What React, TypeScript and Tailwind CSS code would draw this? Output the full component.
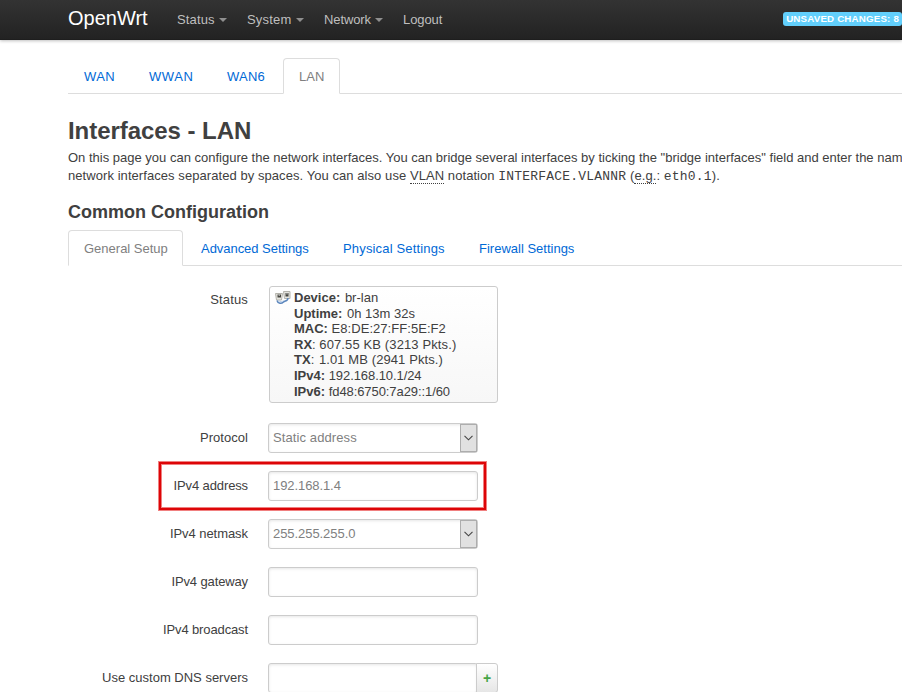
import { type ReactNode } from "react";
import clsx from "clsx";

type Item = {
  label: string;
  className: string;
};

const menuItems = [
  { label: "Status", dropdown: true, className: "w-[70px] tracking-[0.15px]" },
  { label: "System", dropdown: true, className: "w-[77px] tracking-[0.2px]" },
  { label: "Network", dropdown: true, className: "w-[79px] tracking-[-0.1px]" },
  { label: "Logout", dropdown: false, className: "tracking-[-0.1px]" },
];

const interfaceTabs: Item[] = [
  { label: "WAN", className: "w-[63px] tracking-[0.4px]" },
  { label: "WWAN", className: "w-[76px] tracking-[0.6px]" },
  { label: "WAN6", className: "w-[70px] tracking-[0.25px]" },
  { label: "LAN", className: "w-[57px]" },
];

const setupTabs: Item[] = [
  { label: "General Setup", className: "w-[115px]" },
  { label: "Advanced Settings", className: "w-[140px] tracking-[-0.04px]" },
  { label: "Physical Settings", className: "w-[134px] tracking-[0.16px]" },
  { label: "Firewall Settings", className: "w-[128px]" },
];

const statusRows = [
  { name: "Device:", value: "br-lan", className: "ml-px" },
  { name: "Uptime:", value: "0h 13m 32s", className: "ml-px" },
  { name: "MAC:", value: "E8:DE:27:FF:5E:F2", className: "tracking-[0.05px]" },
  {
    name: "RX",
    value: "607.55 KB (3213 Pkts.)",
    colon: true,
    className: "tracking-[0.12px]",
  },
  {
    name: "TX",
    value: "1.01 MB (2941 Pkts.)",
    colon: true,
    className: "ml-px tracking-[0.1px]",
  },
  { name: "IPv4:", value: "192.168.10.1/24", className: "tracking-[-0.08px]" },
  {
    name: "IPv6:",
    value: "fd48:6750:7a29::1/60",
    className: "tracking-[-0.08px]",
  },
];

function Header() {
  return (
    <header className="flex h-10 items-start bg-linear-to-b from-[#333] to-[#222] pl-[68px] shadow-[0_1px_3px_rgba(0,0,0,0.25),inset_0_-1px_0_rgba(0,0,0,0.1)]">
      <a className="w-[99px] pt-[8px] text-xl leading-5 text-white">OpenWrt</a>
      <nav className="flex pt-[10px] pl-[10px] leading-[19px] text-[#bfbfbf]">
        {menuItems.map((item) => (
          <a
            key={item.label}
            className={clsx("flex items-center", item.className)}
          >
            {item.label}
            {item.dropdown && (
              <span className="mt-px ml-1 border-x-4 border-t-4 border-x-transparent border-t-[#8f8f8f]" />
            )}
          </a>
        ))}
      </nav>
      <span className="mt-3 ml-auto h-[14px] rounded-[3px] bg-[#62cffc] px-[3px] text-[9.75px] leading-[14px] font-bold tracking-[0.17px] text-white">
        UNSAVED CHANGES: 8
      </span>
    </header>
  );
}

function Tabs({ items, active }: { items: Item[]; active: string }) {
  return (
    <ul className="flex h-9 border-b border-[#ddd]">
      {items.map((item) => (
        <li
          key={item.label}
          className={clsx(
            "mr-[2px] h-9 rounded-t border px-[15px] leading-9 whitespace-nowrap",
            item.label === active
              ? "border-[#ddd] border-b-white bg-white text-[#808080]"
              : "border-transparent text-[#0069d6]",
            item.className
          )}
        >
          {item.label}
        </li>
      ))}
    </ul>
  );
}

type RowProps = {
  label: string;
  labelClass?: string;
  children: ReactNode;
};

function Row({ label, labelClass, children }: RowProps) {
  return (
    <div className="mb-[18px] flex items-start">
      <label
        className={clsx("w-[180px] pt-[6px] text-right leading-[18px]", labelClass)}
      >
        {label}
      </label>
      <div className="ml-5 flex">{children}</div>
    </div>
  );
}

function TextInput({ value = "" }: { value?: string }) {
  return (
    <input
      className="h-[30px] w-[210px] rounded-[3px] border border-[#ccc] px-1 pb-[2px] tracking-[-0.08px] text-[#808080] shadow-[inset_0_1px_3px_rgba(0,0,0,0.1)]"
      defaultValue={value}
    />
  );
}

function SelectBox({ value, className }: { value: string; className: string }) {
  return (
    <div className="flex h-[30px] w-[210px] rounded-[3px] border border-[#ccc] shadow-[inset_0_1px_3px_rgba(0,0,0,0.1)]">
      <span
        className={clsx("flex-1 pl-1 leading-[27px] text-[#808080]", className)}
      >
        {value}
      </span>
      <span className="flex w-[17px] items-center justify-center border border-[#adadad] bg-[#e1e1e1]">
        <svg width="9" height="6" viewBox="0 0 9 6" fill="none">
          <path d="M0.5 0.8 4.5 4.8 8.5 0.8" stroke="#444" strokeWidth="1.1" />
        </svg>
      </span>
    </div>
  );
}

// Two linked network sockets
function BridgeIcon() {
  return (
    <svg width="16" height="16" viewBox="0 0 16 16" fill="none">
      <path d="M0.5 3.5h7l-1 6.5h-5z" fill="#e4e4de" stroke="#b3b2ab" />
      <path d="M8.500 1.500h6.500v7h-5.500z" fill="#e4e4de" stroke="#b3b2ab" />
      <path d="M2.500 4.500h3.500v3h-3.500zM10.500 3h3v3.500h-3z" fill="#45453f" />
      <path d="M4.200 4.500v1.500M12 3v1.500" stroke="#ccc" />
      <path
        d="M2 10.500c1 3.500 4.500 3.500 6.500 1.500 1.500-1.500 4.500-.5 4.500-4"
        stroke="#5b86bd"
        strokeWidth="1.500"
      />
      <path d="M3.500 10.500c2 1.500 3.500 1.500 5 0" stroke="#a9c4e6" strokeWidth="0.800" />
    </svg>
  );
}

function StatusBox() {
  return (
    <div className="mt-[2px] ml-px flex h-[117px] w-[229px] rounded-[3px] border border-[#ccc] bg-linear-to-b from-white to-[#f7f7f7] pt-[3px] pl-[5px]">
      <BridgeIcon />
      <div className="ml-[3px] leading-[15.6px] whitespace-nowrap">
        {statusRows.map((row) => (
          <div key={row.name}>
            <strong>{row.name}</strong>
            {row.colon && ":"} <span className={row.className}>{row.value}</span>
          </div>
        ))}
      </div>
    </div>
  );
}

function Code({ children }: { children: ReactNode }) {
  return (
    <var className="font-['Liberation_Mono',monospace] tracking-[0.2px] not-italic">
      {children}
    </var>
  );
}

export default function App() {
  return (
    <div className="h-[692px] w-[902px] overflow-hidden bg-white font-['Liberation_Sans',Arial,sans-serif] text-[13px] leading-[18px] text-[#404040]">
      <Header />
      <main className="pt-[18px] pl-[68px]">
        <Tabs items={interfaceTabs} active="LAN" />
        <h2 className="mt-[19px] text-2xl leading-9 font-bold tracking-[-0.05px]">
          Interfaces - LAN
        </h2>
        <div className="whitespace-nowrap">
          <p>
            On this page you can configure the network interfaces. You can
            bridge several interfaces by ticking the "bridge interfaces" field
            and enter the nam
          </p>
          <p className="tracking-[0.065px]">
            network interfaces separated by spaces. You can also use{" "}
            <abbr className="border-b border-dotted border-[#404040]">VLAN</abbr>{" "}
            notation <Code>INTERFACE.VLANNR</Code> (
            <abbr className="border-b border-dotted border-[#404040]">e.g.</abbr>
            : <Code>eth0.1</Code>).
          </p>
        </div>
        <h3 className="mt-[8px] text-lg leading-9 font-bold">
          Common Configuration
        </h3>
        <Tabs items={setupTabs} active="General Setup" />
        <form className="relative pt-[18px]">
          <Row label="Status" labelClass="mt-px tracking-[0.15px]">
            <StatusBox />
          </Row>
          <div className="pt-[2px]">
            <Row label="Protocol" labelClass="tracking-[0.05px]">
              <SelectBox value="Static address" className="tracking-[0.1px]" />
            </Row>
            <Row label="IPv4 address" labelClass="tracking-[-0.12px]">
              <TextInput value="192.168.1.4" />
            </Row>
            <Row label="IPv4 netmask" labelClass="tracking-[-0.06px]">
              <SelectBox value="255.255.255.0" className="tracking-[-0.06px]" />
            </Row>
            <Row label="IPv4 gateway" labelClass="tracking-[-0.12px]">
              <TextInput />
            </Row>
            <Row label="IPv4 broadcast" labelClass="tracking-[-0.12px]">
              <TextInput />
            </Row>
            <Row label="Use custom DNS servers">
              <TextInput />
              <button
                type="button"
                className="-ml-[2px] h-[30px] w-[22px] rounded-r-[3px] border border-[#ccc] bg-linear-to-b from-white to-[#e6e6e6] text-sm font-bold text-[#46a546]"
              >
                +
              </button>
            </Row>
          </div>
          <div className="pointer-events-none absolute top-[195px] left-[90px] h-[50px] w-[329px] border border-[#f08080]">
            <div className="h-full border-2 border-[#dd0507] outline-1 -outline-offset-3 outline-[#f08080]" />
          </div>
        </form>
      </main>
    </div>
  );
}
